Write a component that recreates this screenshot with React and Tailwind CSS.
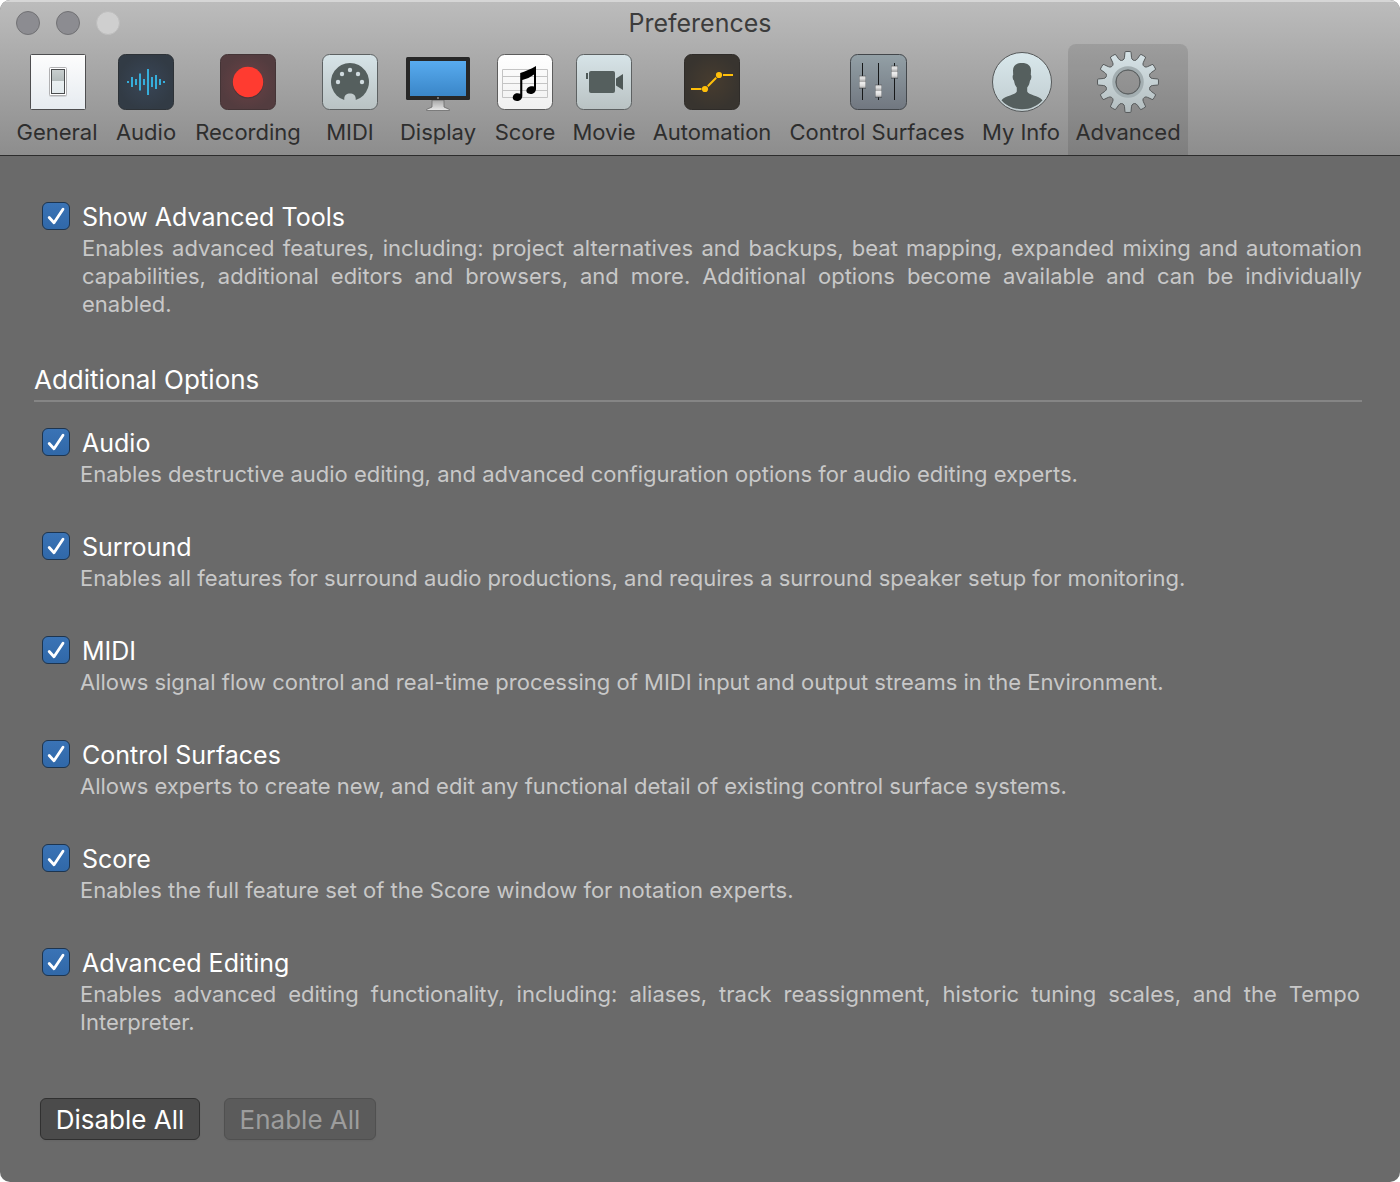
import React, { useState } from "react";

// Outline of the twelve-tooth gear, centred on 32,32
const gearPath = (() => {
  const point = (radius, angle) => {
    const a = (angle * Math.PI) / 180;
    return `${(32 + radius * Math.sin(a)).toFixed(2)} ${(32 - radius * Math.cos(a)).toFixed(2)}`;
  };
  let d = "";
  for (let i = 0; i < 12; i++) {
    const a = i * 30;
    d += `${i === 0 ? "M" : "L"}${point(22.5, a - 13)} Q${point(23, a - 9)} ${point(25, a - 8)} L${point(29.5, a - 6)} L${point(30.5, a - 5)} `;
    d += `A30.5 30.5 0 0 1 ${point(30.5, a + 5)} L${point(29.5, a + 6)} L${point(25, a + 8)} Q${point(23, a + 9)} ${point(22.5, a + 13)} `;
  }
  d += "Z M32 20 A12 12 0 1 0 32 44 A12 12 0 1 0 32 20 Z";
  return d;
})();

const Icon = ({ children }) => (
  <svg className="h-16 w-16 shrink-0" viewBox="0 0 64 64" fill="none" aria-hidden="true">
    {children}
  </svg>
);

const GeneralIcon = () => (
  <Icon>
    <defs>
      <linearGradient id="plate" x1="0" y1="0" x2="0" y2="1">
        <stop offset="0" stopColor="#fdfdfd" />
        <stop offset="1" stopColor="#e6ebf0" />
      </linearGradient>
      <linearGradient id="rocker" x1="0" y1="0" x2="0" y2="1">
        <stop offset="0" stopColor="#c9cfcf" />
        <stop offset="0.47" stopColor="#b4bcbc" />
        <stop offset="0.5" stopColor="#eaf0f2" />
        <stop offset="1" stopColor="#e3eaed" />
      </linearGradient>
    </defs>
    <rect x="5.5" y="4.5" width="55" height="55" rx="1" fill="url(#plate)" stroke="#4e4e50" />
    <rect x="24" y="19" width="18" height="28" rx="2" fill="#000" opacity="0.12" />
    <rect x="24.5" y="17.5" width="17" height="28" rx="1" fill="#fff" stroke="#b0b0b2" />
    <rect x="26.5" y="19.5" width="13" height="24" fill="url(#rocker)" stroke="#4a4c4e" />
  </Icon>
);

const waveBars = [2, 10, 6, 17, 6, 26, 10, 14, 6, 2];

const AudioIcon = () => (
  <Icon>
    <defs>
      <radialGradient id="audioTile">
        <stop offset="0" stopColor="#394657" />
        <stop offset="1" stopColor="#323b45" />
      </radialGradient>
    </defs>
    <rect x="4.5" y="4.5" width="55" height="55" rx="7" fill="url(#audioTile)" stroke="#2d3237" />
    {waveBars.map((h, i) => (
      <rect key={i} x={13 + i * 4} y={32 - h / 2} width="2" height={h} fill="#36aedb" />
    ))}
  </Icon>
);

const RecordingIcon = () => (
  <Icon>
    <defs>
      <radialGradient id="recTile">
        <stop offset="0" stopColor="#6b4145" />
        <stop offset="1" stopColor="#533c3f" />
      </radialGradient>
    </defs>
    <rect x="4.5" y="4.5" width="55" height="55" rx="7" fill="url(#recTile)" stroke="#443436" />
    <circle cx="32" cy="33" r="15.5" fill="#3a2a2c" opacity="0.4" />
    <circle cx="32" cy="32" r="15.2" fill="#ff3b30" />
  </Icon>
);

const PaleTile = () => (
  <>
    <defs>
      <linearGradient id="pale" x1="0" y1="0" x2="0" y2="1">
        <stop offset="0" stopColor="#d7e4e8" />
        <stop offset="1" stopColor="#b9c2c3" />
      </linearGradient>
    </defs>
    <rect x="4.5" y="4.5" width="55" height="55" rx="7" fill="url(#pale)" stroke="#5d6162" />
  </>
);

const MidiIcon = () => (
  <Icon>
    <PaleTile />
    <path
      d="M26.3 50 C25.8 45.5 28.5 43.5 32 43.5 C35.5 43.5 38.2 45.5 37.7 50 A19 19 0 1 0 26.3 50 Z"
      fill="#555f5e"
    />
    {[[20, 32], [24, 24], [32, 20], [40, 24], [44, 32]].map(([x, y]) => (
      <circle key={x} cx={x} cy={y} r="2.2" fill="#d0dbdf" />
    ))}
  </Icon>
);

const DisplayIcon = () => (
  <Icon>
    <defs>
      <linearGradient id="screen" x1="0" y1="0" x2="0" y2="1">
        <stop offset="0" stopColor="#58abef" />
        <stop offset="1" stopColor="#3a86c8" />
      </linearGradient>
      <linearGradient id="stand" x1="0" y1="0" x2="0" y2="1">
        <stop offset="0" stopColor="#a5a5a5" />
        <stop offset="1" stopColor="#e9e9e9" />
      </linearGradient>
    </defs>
    <path
      d="M26 50 H38 V57 L43.5 59.5 V60.5 H20.5 V59.5 L26 57 Z"
      fill="url(#stand)"
      stroke="#6a6a6a"
      strokeWidth="0.8"
    />
    <rect x="0" y="7" width="64" height="43" rx="1.5" fill="#272727" />
    <rect x="4" y="11" width="56" height="35" fill="url(#screen)" />
    <circle cx="32" cy="48" r="1" fill="#8a8a8a" />
  </Icon>
);

const ScoreIcon = () => (
  <Icon>
    <defs>
      <linearGradient id="paper" x1="0" y1="0" x2="0" y2="1">
        <stop offset="0" stopColor="#ffffff" />
        <stop offset="1" stopColor="#f0f0f0" />
      </linearGradient>
    </defs>
    <rect x="4.5" y="4.5" width="55" height="55" rx="7" fill="url(#paper)" stroke="#5c5c5c" />
    <path
      d="M9.5 19.5 H54.5 M9.5 26.5 H54.5 M9.5 33.5 H54.5 M9.5 40.5 H54.5 M9.5 47.5 H54.5 M9.5 19.5 V47.5 M54.5 19.5 V47.5"
      stroke="#c4c4c4"
    />
    <path
      d="M27.2 23 C32 21.5 38 19 43 16 V39 C43 43 38.5 45 35.5 43.6 C32 42 33.3 37.2 37 36.4 C38.6 36 40 36.2 41 36.6 V24.5 C37.5 27.2 33.5 29 29.3 30 V46 C29.3 50 25 52 21.7 50.6 C18.4 49 19.6 44.2 23.3 43.3 C24.8 43 26.2 43.2 27.2 43.7 Z"
      fill="#000"
    />
  </Icon>
);

const MovieIcon = () => (
  <Icon>
    <PaleTile />
    <rect x="14" y="23" width="2" height="6" fill="#4e5857" />
    <rect x="17" y="21" width="26" height="22" rx="2" fill="#555f5e" />
    <path d="M44 28.5 L51 24 V40 L44 35.5 Z" fill="#4e5857" />
  </Icon>
);

const AutomationIcon = () => (
  <Icon>
    <defs>
      <radialGradient id="autoTile">
        <stop offset="0" stopColor="#473c2f" />
        <stop offset="1" stopColor="#38342f" />
      </radialGradient>
    </defs>
    <rect x="4.5" y="4.5" width="55" height="55" rx="7" fill="url(#autoTile)" stroke="#2f2c29" />
    <path d="M11 39 H21.5 M27.8 36.2 L36.2 27.8 M43 25 H53" stroke="#ffbf0a" strokeWidth="2" />
    <circle cx="25" cy="39" r="3.1" fill="#ffbf0a" />
    <circle cx="39" cy="25" r="3.1" fill="#ffbf0a" />
  </Icon>
);

const SurfacesIcon = () => (
  <Icon>
    <defs>
      <linearGradient id="surface" x1="0" y1="0" x2="0" y2="1">
        <stop offset="0" stopColor="#93a0a6" />
        <stop offset="1" stopColor="#717780" />
      </linearGradient>
      <linearGradient id="knob" x1="0" y1="0" x2="0" y2="1">
        <stop offset="0" stopColor="#9c9c9c" />
        <stop offset="0.15" stopColor="#ececec" />
        <stop offset="0.45" stopColor="#a8a8a8" />
        <stop offset="0.55" stopColor="#f2f2f2" />
        <stop offset="0.85" stopColor="#d8d8d8" />
        <stop offset="1" stopColor="#8c8c8c" />
      </linearGradient>
    </defs>
    <rect x="5.5" y="4.5" width="56" height="55" rx="7" fill="url(#surface)" stroke="#43474b" />
    {[[17.5, 26], [33.5, 35], [49.5, 16]].map(([x, y]) => (
      <g key={x}>
        <path d={`M${x} 13 V50`} stroke="#17191a" />
        <rect x={x - 3.5} y={y - 0.5} width="7" height="13.5" rx="0.5" fill="#3c4043" opacity="0.5" />
        <rect x={x - 3} y={y} width="6" height="12" fill="url(#knob)" />
      </g>
    ))}
  </Icon>
);

const InfoIcon = () => (
  <Icon>
    <defs>
      <linearGradient id="avatar" x1="0" y1="0" x2="0" y2="1">
        <stop offset="0" stopColor="#d9e8ec" />
        <stop offset="1" stopColor="#c0cccf" />
      </linearGradient>
    </defs>
    <circle cx="33" cy="32" r="29.5" fill="url(#avatar)" stroke="#56595a" />
    <path
      d="M33 13 C38.5 13 42 15.5 42 20.5 L41.8 25 C42.8 25.5 42.4 29.5 41 30.5 C40.6 33.5 39.8 35.5 38.2 37.5 V41.5 C39.5 45 49.5 45.5 53.5 50.2 C48.8 55.8 41.5 59.2 33 59.2 C24.5 59.2 17.2 55.8 12.5 50.2 C16.5 45.5 26.5 45 27.8 41.5 V37.5 C26.2 35.5 25.4 33.5 25 30.5 C23.6 29.5 23.2 25.5 24.2 25 L24 20.5 C24 15.5 27.5 13 33 13 Z"
      fill="#555f5e"
    />
  </Icon>
);

const AdvancedIcon = () => (
  <Icon>
    <defs>
      <linearGradient id="gear" x1="0" y1="0" x2="0" y2="1">
        <stop offset="0" stopColor="#d7e4e8" />
        <stop offset="1" stopColor="#b3bdbf" />
      </linearGradient>
    </defs>
    <path d={gearPath} fill="url(#gear)" stroke="#56595a" fillRule="evenodd" strokeLinejoin="round" />
    <circle cx="32" cy="32" r="14" stroke="#a3aeb1" strokeWidth="3.5" />
    <circle cx="32" cy="32" r="12.2" stroke="#5f6465" />
  </Icon>
);

const tabs = [
  { label: "General", width: "w-[98px]", icon: GeneralIcon },
  { label: "Audio", width: "w-20", icon: AudioIcon },
  { label: "Recording", width: "w-[124px]", icon: RecordingIcon },
  { label: "MIDI", width: "w-20", icon: MidiIcon },
  { label: "Display", width: "w-24", icon: DisplayIcon },
  { label: "Score", width: "w-[78px]", icon: ScoreIcon },
  { label: "Movie", width: "w-20", icon: MovieIcon },
  { label: "Automation", width: "w-[136px]", icon: AutomationIcon },
  { label: "Control Surfaces", width: "w-[194px]", icon: SurfacesIcon },
  { label: "My Info", width: "w-[94px]", icon: InfoIcon },
  { label: "Advanced", width: "w-[120px]", icon: AdvancedIcon },
];

const options = [
  {
    id: "audio",
    title: "Audio",
    text: "Enables destructive audio editing, and advanced configuration options for audio editing experts.",
  },
  {
    id: "surround",
    title: "Surround",
    text: "Enables all features for surround audio productions, and requires a surround speaker setup for monitoring.",
  },
  {
    id: "midi",
    title: "MIDI",
    text: "Allows signal flow control and real-time processing of MIDI input and output streams in the Environment.",
  },
  {
    id: "surfaces",
    title: "Control Surfaces",
    text: "Allows experts to create new, and edit any functional detail of existing control surface systems.",
  },
  {
    id: "score",
    title: "Score",
    text: "Enables the full feature set of the Score window for notation experts.",
  },
  {
    id: "editing",
    title: "Advanced Editing",
    text: "Enables advanced editing functionality, including: aliases, track reassignment, historic tuning scales, and the Tempo Interpreter.",
  },
];

const allOptions = (value) => Object.fromEntries(options.map((o) => [o.id, value]));

const Option = ({ id, title, text, checked, onChange, inset }) => (
  <div>
    <div className="flex h-7 items-center gap-3 pl-2">
      <span className="grid h-7 w-7 shrink-0">
        <input
          type="checkbox"
          id={id}
          checked={checked}
          onChange={onChange}
          aria-describedby={`${id}-text`}
          className="peer col-start-1 row-start-1 h-7 w-7 appearance-none rounded-md border border-[#1d3550] bg-[#555] checked:bg-linear-to-b checked:from-[#3a73b5] checked:to-[#3068a8]"
        />
        <svg
          className="pointer-events-none invisible col-start-1 row-start-1 h-7 w-7 peer-checked:visible"
          viewBox="0 0 28 28"
          fill="none"
          aria-hidden="true"
        >
          <path d="M7.2 15.5 L12 20.8 L21 7.2" stroke="#fff" strokeWidth="2.8" strokeLinecap="round" strokeLinejoin="round" />
        </svg>
      </span>
      <label htmlFor={id} className="pt-0.5 text-[25px] leading-7 text-white">
        {title}
      </label>
    </div>
    <p id={`${id}-text`} className={`mt-1 text-justify text-[22px] leading-7 text-[#c8c8c8] ${inset}`}>
      {text}
    </p>
  </div>
);

const App = () => {
  const [activeTab, setActiveTab] = useState("Advanced");
  const [showAdvanced, setShowAdvanced] = useState(true);
  const [enabled, setEnabled] = useState(allOptions(true));

  const values = Object.values(enabled);

  return (
    <div className="min-h-screen bg-white font-['Inter',sans-serif]">
      <div className="flex min-h-screen flex-col overflow-hidden rounded-[10px] bg-[#6a6a6a]">
        <header className="border-t-2 border-b border-t-[#d6d6d6] border-b-[#2c2c2c] bg-linear-to-b from-[#bcbcbc] to-[#8d8d8d]">
          {/* Title bar */}
          <div className="grid h-[42px] grid-cols-[1fr_auto_1fr] items-center px-4">
            <div className="flex gap-4">
              <button aria-label="Close" className="h-6 w-6 rounded-full border border-[#717174] bg-[#8c8c91]"></button>
              <button aria-label="Minimize" className="h-6 w-6 rounded-full border border-[#717174] bg-[#8c8c91]"></button>
              <button aria-label="Zoom" disabled className="h-6 w-6 rounded-full border border-[#bdbdbd] bg-[#cfcfcf]"></button>
            </div>
            <h1 className="text-[25px] leading-8 text-[#3c3c3c]">Preferences</h1>
          </div>

          {/* Toolbar */}
          <nav className="flex px-2">
            {tabs.map(({ label, width, icon: TabIcon }) => (
              <button
                key={label}
                onClick={() => setActiveTab(label)}
                aria-pressed={activeTab === label}
                className={`flex h-[111px] shrink-0 flex-col items-center rounded-t-lg pt-1.5 text-[22px] leading-7 whitespace-nowrap text-[#2e2e2e] ${width} ${
                  activeTab === label ? "bg-black/10" : ""
                }`}
              >
                <TabIcon />
                <span className="mt-1">{label}</span>
              </button>
            ))}
          </nav>
        </header>

        <main className="flex-1 px-[34px] pt-[46px] pr-[38px] pb-10">
          <Option
            id="show-advanced"
            title="Show Advanced Tools"
            text="Enables advanced features, including: project alternatives and backups, beat mapping, expanded mixing and automation capabilities, additional editors and browsers, and more. Additional options become available and can be individually enabled."
            checked={showAdvanced}
            onChange={(e) => setShowAdvanced(e.target.checked)}
            inset="pl-12"
          />

          <h2 className="mt-[46px] border-b-2 border-[#858585] pb-1 text-[26px] leading-8 text-white">Additional Options</h2>

          <div className="mt-[26px] flex flex-col gap-11">
            {options.map((option) => (
              <Option
                key={option.id}
                {...option}
                checked={enabled[option.id]}
                onChange={(e) => setEnabled({ ...enabled, [option.id]: e.target.checked })}
                inset="pl-[46px] pr-0.5"
              />
            ))}
          </div>

          <div className="mt-[62px] flex gap-6 pl-1.5">
            <button
              onClick={() => setEnabled(allOptions(false))}
              disabled={values.every((v) => !v)}
              className="h-[42px] w-40 rounded-md border border-[#303030] bg-[#4b4b4b] pt-0.5 text-[26px] leading-8 text-white shadow-xs disabled:border-[#505050] disabled:bg-[#5b5b5b] disabled:text-[#9d9d9d]"
            >
              Disable All
            </button>
            <button
              onClick={() => setEnabled(allOptions(true))}
              disabled={values.every((v) => v)}
              className="h-[42px] w-[152px] rounded-md border border-[#303030] bg-[#4b4b4b] pt-0.5 text-[26px] leading-8 text-white shadow-xs disabled:border-[#505050] disabled:bg-[#5b5b5b] disabled:text-[#9d9d9d]"
            >
              Enable All
            </button>
          </div>
        </main>
      </div>
    </div>
  );
};

export default App;
